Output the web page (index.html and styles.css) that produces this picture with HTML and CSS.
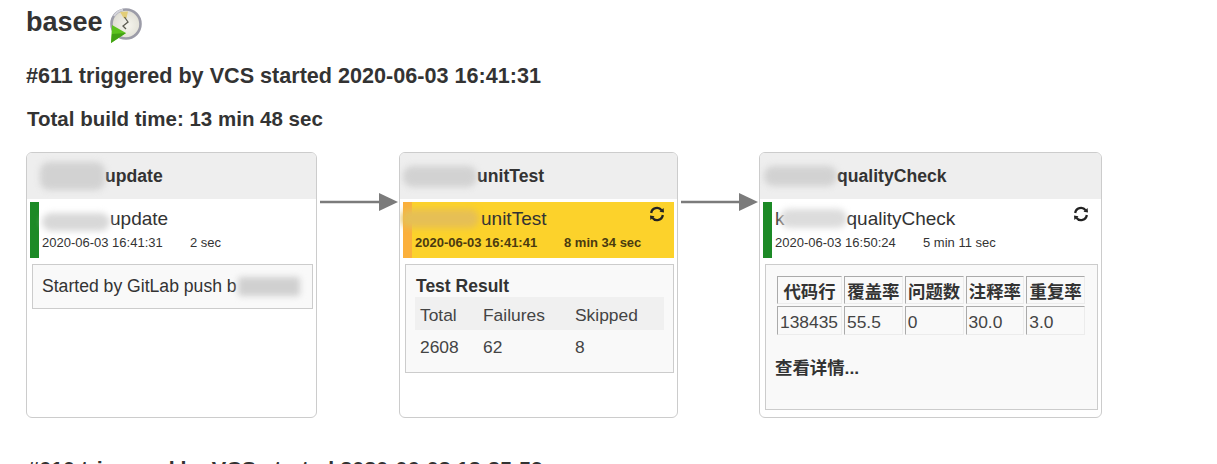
FILE: index.html
```html
<!DOCTYPE html>
<html lang="en">
<head>
<meta charset="utf-8">
<title>basee</title>
<link rel="stylesheet" href="styles.css">
</head>
<body>
<h1 class="job-title">basee
  <svg class="job-icon" width="34" height="36" viewBox="0 0 34 36" aria-hidden="true">
    <defs>
      <radialGradient id="face" cx="0.55" cy="0.55" r="0.6">
        <stop offset="0" stop-color="#f6f5ee"/>
        <stop offset="1" stop-color="#dcdad0"/>
      </radialGradient>
    </defs>
    <circle cx="17" cy="17" r="14.5" fill="url(#face)" stroke="#9c9ca8" stroke-width="2.6"/>
    <path d="M5 9 A14.5 14.5 0 0 1 14 2.8" fill="none" stroke="#d4d4da" stroke-width="2"/>
    <path d="M11 5 L19 4.5 L17.5 11 L15 11.5 Z" fill="#e2cd78"/>
    <path d="M15.5 10 L19 15 L14 19 L17 22" fill="none" stroke="#5c5c52" stroke-width="1.3"/>
    <path d="M2 36 L3 18 L17 26 Z" fill="#5cc21e"/>
    <path d="M2 36 L3 27 L17 26 Z" fill="#41a114"/>
  </svg>
</h1>
<h2 class="run-title">#611 triggered by VCS started 2020-06-03 16:41:31</h2>
<h3 class="run-total">Total build time: 13 min 48 sec</h3>

<div class="pipeline">
  <section class="card card-update">
    <header class="card-head"><span class="redact redact-head-a"></span>update</header>
    <div class="stage stage-ok">
      <div class="stage-name"><span class="redact redact-stage-a"></span>update</div>
      <div class="stage-meta"><span class="stage-date">2020-06-03 16:41:31</span><span>2 sec</span></div>
    </div>
    <div class="box box-short">Started by GitLab push b<span class="redact redact-user"></span></div>
  </section>

  <svg class="arrow" width="82" height="22" viewBox="0 0 82 22" aria-hidden="true">
    <path d="M3 11 H64" stroke="#7b7b7b" stroke-width="2.5"/>
    <path d="M62 2 L81 11 L62 20 Z" fill="#7b7b7b"/>
  </svg>

  <section class="card card-test">
    <header class="card-head card-head-tight"><span class="redact redact-head-b"></span>unitTest</header>
    <div class="stage stage-running">
      <div class="stage-name"><span class="redact redact-stage-b"></span>unitTest</div>
      <div class="stage-meta"><span class="stage-date">2020-06-03 16:41:41</span><span>8 min 34 sec</span></div>
      <svg class="spin" width="16" height="16" viewBox="0 0 16 16" aria-hidden="true">
        <path d="M2.2 7 A5.8 5.8 0 0 1 12.6 4.2" fill="none" stroke="#222" stroke-width="2.3"/>
        <path d="M13.8 9 A5.8 5.8 0 0 1 3.4 11.8" fill="none" stroke="#222" stroke-width="2.3"/>
        <path d="M10.5 5.8 L15 6.4 L14.6 2 Z" fill="#222"/>
        <path d="M5.5 10.2 L1 9.6 L1.4 14 Z" fill="#222"/>
      </svg>
    </div>
    <div class="box box-result">
      <div class="result-title">Test Result</div>
      <table class="result-table">
        <thead><tr><th class="col-total">Total</th><th class="col-fail">Failures</th><th>Skipped</th></tr></thead>
        <tbody><tr><td>2608</td><td>62</td><td>8</td></tr></tbody>
      </table>
    </div>
  </section>

  <svg class="arrow" width="81" height="22" viewBox="0 0 81 22" aria-hidden="true">
    <path d="M3 11 H63" stroke="#7b7b7b" stroke-width="2.5"/>
    <path d="M61 2 L80 11 L61 20 Z" fill="#7b7b7b"/>
  </svg>

  <section class="card card-quality">
    <header class="card-head"><span class="redact redact-head-c"></span>qualityCheck</header>
    <div class="stage stage-ok">
      <div class="stage-name"><span>k</span><span class="redact redact-stage-c"></span>qualityCheck</div>
      <div class="stage-meta"><span class="stage-date">2020-06-03 16:50:24</span><span>5 min 11 sec</span></div>
      <svg class="spin" width="16" height="16" viewBox="0 0 16 16" aria-hidden="true">
        <path d="M2.2 7 A5.8 5.8 0 0 1 12.6 4.2" fill="none" stroke="#222" stroke-width="2.3"/>
        <path d="M13.8 9 A5.8 5.8 0 0 1 3.4 11.8" fill="none" stroke="#222" stroke-width="2.3"/>
        <path d="M10.5 5.8 L15 6.4 L14.6 2 Z" fill="#222"/>
        <path d="M5.5 10.2 L1 9.6 L1.4 14 Z" fill="#222"/>
      </svg>
    </div>
    <div class="box box-metrics">
      <table class="metric-table">
        <thead><tr><th>代码行</th><th>覆盖率</th><th>问题数</th><th>注释率</th><th>重复率</th></tr></thead>
        <tbody><tr><td>138435</td><td>55.5</td><td>0</td><td>30.0</td><td>3.0</td></tr></tbody>
      </table>
      <div class="details">查看详情...</div>
    </div>
  </section>
</div>

<h2 class="run-title run-next">#610 triggered by VCS started 2020-06-03 12:25:59</h2>
</body>
</html>
```
FILE: styles.css
```css
* { box-sizing: border-box; }

html, body {
  height: 100%;
  overflow: hidden;
}

body {
  margin: 0;
  padding: 6px 0 0 26px;
  background: #fff;
  color: #333;
  font-family: "Liberation Sans", "Noto Sans CJK SC", sans-serif;
}

.job-title {
  display: flex;
  align-items: flex-start;
  gap: 6px;
  height: 36px;
  margin: 0;
  font-size: 27px;
  line-height: 32px;
  font-weight: 700;
}

.job-icon { margin-top: 1px; }

.run-title {
  margin: 22px 0 0;
  font-size: 21.6px;
  line-height: 24px;
  font-weight: 700;
}

.run-total {
  margin: 19px 0 0 1px;
  font-size: 20.5px;
  line-height: 24px;
  font-weight: 700;
}

.pipeline {
  display: flex;
  align-items: flex-start;
  height: 266px;
  margin-top: 21px;
}

.arrow {
  flex: none;
  margin-top: 39px;
}

.card {
  flex: none;
  height: 266px;
  border: 1px solid #ccc;
  border-radius: 6px;
  overflow: hidden;
  background: #fff;
}

.card-update { width: 291px; }
.card-test { width: 279px; }
.card-quality { width: 343px; }

.card-head {
  display: flex;
  align-items: center;
  height: 46px;
  padding-left: 13px;
  background: #eee;
  font-size: 17.6px;
  font-weight: 700;
}

.card-test .card-head { padding-left: 3px; }
.card-quality .card-head { padding-left: 4px; }

.redact {
  display: inline-block;
  flex: none;
  vertical-align: middle;
  background: #d2d2d2;
  filter: blur(3px);
  border-radius: 9px;
}

.redact-head-a { width: 65px; height: 28px; }
.redact-head-b { width: 74px; height: 21px; }
.redact-head-c { width: 73px; height: 20px; }
.redact-stage-a { width: 68px; height: 18px; margin-top: 6px; background: #d8d8d8; }
.redact-stage-b { width: 78px; height: 19px; margin-left: -14px; margin-right: 2px; background: #e6bf55; }
.redact-stage-c { width: 67px; height: 19px; margin-left: -5px; background: #dcdcdc; }
.redact-user { width: 62px; height: 19px; background: #d0d0d0; border-radius: 3px; margin-left: 1px; }

.stage {
  position: relative;
  height: 56px;
  margin: 3px 3px 0;
  padding: 4px 0 0 3px;
  border-left: 9px solid #1c8a26;
}

.stage-running {
  background: #fcd22b;
  border-left-color: #fbb03c;
}

.stage-running .stage-meta {
  color: #4a3a10;
  font-weight: 700;
}

.stage-name {
  display: flex;
  align-items: center;
  height: 25px;
  font-size: 19px;
  font-weight: 400;
}

.stage-meta {
  display: flex;
  margin-top: 4px;
  font-size: 13px;
  line-height: 16px;
}

.stage-date { width: 148px; }

.stage-running .stage-date { width: 149px; }

.spin {
  position: absolute;
  top: 4px;
  right: 9px;
}

.box {
  margin: 6px 3px 0 5px;
  border: 1px solid #ccc;
  background: #f9f9f9;
  font-size: 17.6px;
}

.box-short {
  display: flex;
  align-items: center;
  width: 281px;
  height: 45px;
  padding-left: 9px;
}

.box-result {
  height: 109px;
  padding: 10px 9px 0 9px;
}

.result-title {
  padding-left: 1px;
  font-size: 17.5px;
  line-height: 22px;
  font-weight: 700;
}

.result-table {
  width: 100%;
  border-collapse: collapse;
}

.result-table th,
.result-table td {
  padding: 0 5px;
  text-align: left;
  font-weight: 400;
  height: 33px;
  font-size: 17.4px;
  color: #444;
}

.result-table th { background: #f0f0f0; padding-top: 3px; }
.result-table td { height: 35px; }
.col-total { width: 63px; }
.col-fail { width: 92px; }

.box-metrics {
  height: 146px;
  padding: 9px 8px 0 9px;
}

.metric-table {
  border-collapse: separate;
  border-spacing: 2px;
  width: 312px;
  table-layout: fixed;
}

.metric-table th,
.metric-table td {
  height: 28px;
  padding: 0 2px;
  border: 1px solid;
  border-color: #aaa #ececec #ececec #aaa;
  font-size: 17.4px;
  text-align: left;
  white-space: nowrap;
}

.metric-table th { font-weight: 700; text-align: center; padding: 0; }
.metric-table th:first-child, .metric-table td:first-child { width: 65px; }
.metric-table td { height: 29px; padding-top: 3px; color: #444; }

.details {
  margin-top: 20px;
  font-size: 17.4px;
  line-height: 22px;
  font-weight: 700;
}

.run-next {
  margin-top: 40px;
  padding-left: 1px;
}
```
